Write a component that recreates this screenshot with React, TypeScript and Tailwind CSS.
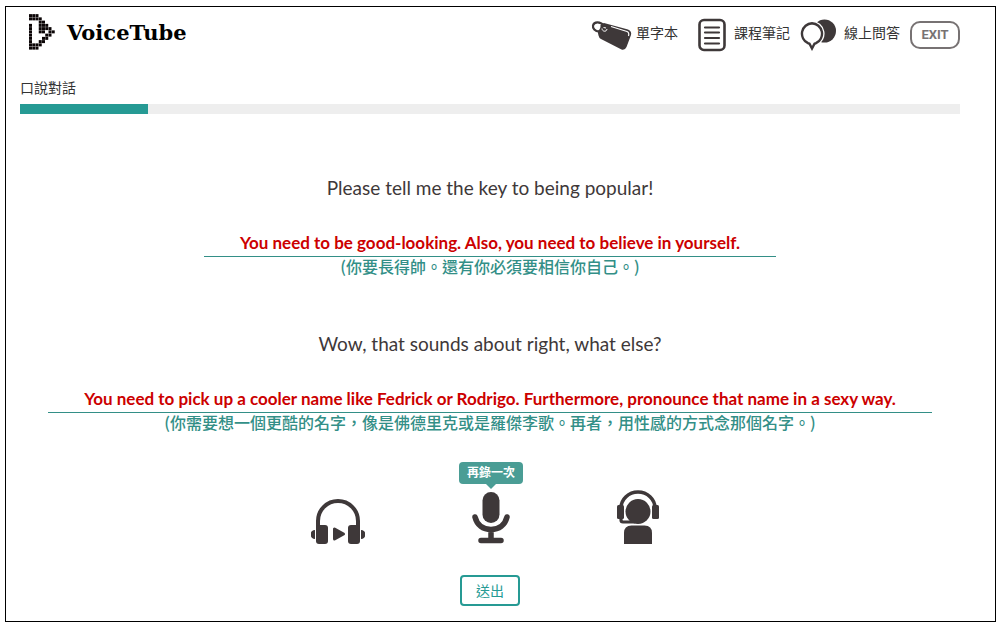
import { useState } from 'react';

const INK = '#3e3839';

const LOGO_ROWS = [
  '###.....',
  '####....',
  '...##...',
  '#..###..',
  '#..####.',
  '#..##.##',
  '#....##.',
  '#...##..',
  '#..##...',
  '####....',
  '###.....',
];

const DIALOGUE = [
  {
    prompt: 'Please tell me the key to being popular!',
    answer: 'You need to be good-looking. Also, you need to believe in yourself.',
    translation: '(你要長得帥。還有你必須要相信你自己。)',
  },
  {
    prompt: 'Wow, that sounds about right, what else?',
    answer:
      'You need to pick up a cooler name like Fedrick or Rodrigo. Furthermore, pronounce that name in a sexy way.',
    translation: '(你需要想一個更酷的名字，像是佛德里克或是羅傑李歌。再者，用性感的方式念那個名字。)',
  },
];

function Logo() {
  return (
    <svg width="26" height="36" viewBox="0 0 80 110" fill="#0b0506" aria-hidden="true">
      {LOGO_ROWS.flatMap((row, y) =>
        [...row].map((cell, x) =>
          cell === '#' ? <rect key={`${x}-${y}`} x={x * 10} y={y * 10} width="9.2" height="9.2" /> : null
        )
      )}
    </svg>
  );
}

function TagIcon() {
  return (
    <svg width="42" height="32" viewBox="0 0 42 32" fill="none" aria-hidden="true">
      <path d="M14 4 L38 10.500 Q42 12 41 16 L36.500 28 Q35 31.500 31.500 30.500 L11 20 Q9 19 8.500 16.500 L7.500 12 Q11 10 10.500 6 Z" fill={INK} />
      <path d="M9 12.500C5 12.500 2.500 9 3 6.500C4 2.500 10 2 14 6.500" stroke={INK} strokeWidth="2.200" />
      <path d="M12 9.500c0 3 4.500 4 5 0.500M13.500 8.500l2.500 0.500" stroke="#fff" strokeWidth="1" />
      <path d="M21 7.500 L37 12.500 Q39.500 13.500 38.500 17" stroke="#fff" strokeWidth="1.200" />
    </svg>
  );
}

function NotesIcon() {
  return (
    <svg width="28" height="34" viewBox="0 0 28 34" fill="none" stroke={INK} strokeLinecap="round" aria-hidden="true">
      <rect x="1.500" y="2" width="25" height="30" rx="4.500" strokeWidth="2.600" />
      <path d="M7 9.500h14M7 14.500h14M7 20h14M7 25.500h14" strokeWidth="2.200" />
    </svg>
  );
}

function ChatIcon() {
  const bubble = 'M12 4.200a10.500 10.500 0 0 1 4 20l-1.500 .6-2.500 4.700-2.500-4.700-1.500-.6a10.500 10.500 0 0 1 4-20z';
  return (
    <svg width="36" height="32" viewBox="0 0 36 32" aria-hidden="true">
      <circle cx="24.500" cy="12" r="11.500" fill={INK} />
      <path d={bubble} fill="#fff" stroke="#fff" strokeWidth="5" />
      <path d={bubble} fill="#fff" stroke={INK} strokeWidth="2.400" />
    </svg>
  );
}

function HeadphonesIcon() {
  return (
    <svg width="54" height="46" viewBox="0 0 54 46" fill={INK} aria-hidden="true">
      <path d="M7 30V23a20 20 0 0 1 40 0v7" fill="none" stroke={INK} strokeWidth="4" />
      <rect x="5" y="27" width="12" height="19" rx="3" />
      <rect x="37" y="27" width="12" height="19" rx="3" />
      <path d="M4 32v9a4.500 4.500 0 0 1 0-9zM50 32v9a4.500 4.500 0 0 0 0-9z" />
      <path d="M23.500 31v10l9-5z" stroke={INK} strokeWidth="3" strokeLinejoin="round" />
    </svg>
  );
}

function MicIcon() {
  return (
    <svg width="38" height="52" viewBox="0 0 38 52" fill={INK} aria-hidden="true">
      <rect x="10.500" y="0" width="17" height="31" rx="8.500" />
      <path
        d="M3 25c2 8 8 12.500 16 12.500S33 33 35 25M19 38v10M9 48.500h20"
        fill="none"
        stroke={INK}
        strokeWidth="5.500"
        strokeLinecap="round"
      />
    </svg>
  );
}

function OperatorIcon() {
  return (
    <svg width="42" height="54" viewBox="0 0 42 54" fill={INK} aria-hidden="true">
      <circle cx="21" cy="21.500" r="12.500" />
      <path d="M4 18a17 16 0 0 1 34 0" fill="none" stroke={INK} strokeWidth="3.600" />
      <rect x="0" y="15" width="7" height="14" rx="1.500" />
      <rect x="35" y="15" width="7" height="14" rx="1.500" />
      <path d="M4 28v2q0 2 2 2H18" fill="none" stroke={INK} strokeWidth="3.200" />
      <path d="M7 54V43q0-7.500 7.500-7.500h13q7.500 0 7.500 7.500v11z" />
    </svg>
  );
}

export default function App() {
  const [recordings, setRecordings] = useState(1);

  return (
    <div className="min-h-screen bg-white pt-[6px] pr-[6px] pl-[5px] font-['Lato','Noto_Sans_CJK_TC',sans-serif] text-[#3e3839]">
      <div className="border border-black pr-[35px] pb-[15px] pl-[14px]">
        <header className="flex items-start justify-between pt-[7px]">
          <a href="#" className="flex items-start gap-3 pl-[9px]">
            <Logo />
            <span className="pt-[5px] font-['DejaVu_Serif',serif] text-[21px] leading-7 font-bold text-black">
              VoiceTube
            </span>
          </a>
          <nav className="flex items-center gap-2.5 pt-1 text-sm text-[#333]">
            <a href="#" className="flex items-center gap-1">
              <TagIcon />
              <span className="pb-1">單字本</span>
            </a>
            <a href="#" className="ml-2.5 flex items-center gap-2">
              <NotesIcon />
              <span className="pb-1">課程筆記</span>
            </a>
            <a href="#" className="flex items-center gap-2">
              <ChatIcon />
              <span className="pb-1">線上問答</span>
            </a>
            <button className="h-7 w-[50px] rounded-[10px] border-2 border-[#777273] font-['Roboto',sans-serif] text-[13px] leading-6 font-bold text-[#777273]">
              EXIT
            </button>
          </nav>
        </header>

        <label htmlFor="lesson" className="mt-6 block text-sm leading-6 text-[#333]">
          口說對話
        </label>
        <progress
          id="lesson"
          value={128}
          max={940}
          className="mt-1 block h-2.5 w-full appearance-none bg-[#eee] [&::-webkit-progress-bar]:bg-[#eee] [&::-webkit-progress-value]:bg-[#269a94]"
        />

        <main className="mt-[60px] text-center">
          {DIALOGUE.map((line) => (
            <section key={line.prompt} className="mb-[55px]">
              <p className="text-[19px] leading-7">{line.prompt}</p>
              <p className="mx-auto mt-[29px] w-fit border-b border-[#338f87] px-9 pb-px text-[17px] leading-6 font-bold text-[#c00]">
                {line.answer}
              </p>
              <p className="font-['Noto_Sans_CJK_TC',sans-serif] text-base leading-[18px] font-medium text-[#338f87]">
                {line.translation}
              </p>
            </section>
          ))}
        </main>

        <div className="mx-auto -mt-6 flex w-[358px] items-end justify-between pr-2.5">
          <button aria-label="Play">
            <HeadphonesIcon />
          </button>
          <button className="flex flex-col items-center" onClick={() => setRecordings(recordings + 1)}>
            <span className="relative mb-2 rounded bg-[#4a9d95] px-2 text-xs leading-[22px] font-bold text-white after:absolute after:top-full after:left-1/2 after:-translate-x-1/2 after:border-5 after:border-b-0 after:border-transparent after:border-t-[#4a9d95]">
              再錄一次
            </span>
            <MicIcon />
          </button>
          <button aria-label="Listen to the teacher">
            <OperatorIcon />
          </button>
        </div>

        <button className="mx-auto mt-[31px] block h-[31px] w-[60px] rounded border-2 border-[#269a94] text-sm text-[#269a94]">
          送出
        </button>
      </div>
    </div>
  );
}
